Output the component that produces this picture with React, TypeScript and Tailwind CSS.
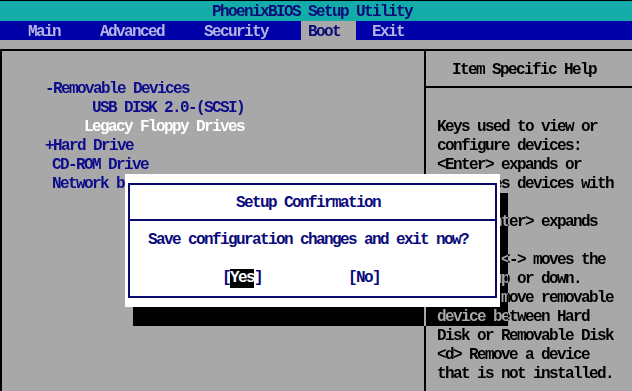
import React from 'react';

const menu = [
  { label: 'Main', ml: 'ml-[28px]' },
  { label: 'Advanced', ml: 'ml-[40px]' },
  { label: 'Security', ml: 'ml-[40px]' },
  { label: 'Boot', ml: 'ml-[33px]', active: true },
  { label: 'Exit', ml: 'ml-[16px]' },
];

const bootItems = [
  { text: '-Removable Devices', pl: 'pl-[43px]', color: 'text-[#0c0c8c]' },
  { text: 'USB DISK 2.0-(SCSI)', pl: 'pl-[90px]', color: 'text-[#0c0c8c]' },
  { text: 'Legacy Floppy Drives', pl: 'pl-[82px]', color: 'text-white' },
  { text: '+Hard Drive', pl: 'pl-[43px]', color: 'text-[#0c0c8c]' },
  { text: 'CD-ROM Drive', pl: 'pl-[50px]', color: 'text-[#0c0c8c]' },
  { text: 'Network boot', pl: 'pl-[50px]', color: 'text-[#0c0c8c]' },
];

const helpLines = [
  'Keys used to view or',
  'configure devices:',
  '<Enter> expands or',
  'collapses devices with',
  'a + or -',
  '<Ctrl+Enter> expands',
  'all',
  '<+> and <-> moves the',
  'device up or down.',
  '<n> May move removable',
  'device between Hard',
  'Disk or Removable Disk',
  '<d> Remove a device',
  'that is not installed.',
];

export default function App() {
  return (
    <div className="relative w-[632px] h-[391px] overflow-hidden bg-[#a8a8a8] font-['Liberation_Mono',monospace] text-[16px] font-bold tracking-[-1.6px] leading-[19px] flex flex-col">
      <div className="h-px bg-black" />
      {/* Title bar */}
      <div className="h-[20px] bg-[#14aca8] text-[#0a0a7a] pt-[2px] pl-[212px] whitespace-pre">
        PhoenixBIOS Setup Utility
      </div>
      {/* Menu bar */}
      <div className="h-[19px] bg-[#0000a8] flex items-stretch whitespace-pre">
        {menu.map((m) =>
          m.active ? (
            <div key={m.label} className={`${m.ml} w-[55px] pl-[7px] pt-[2px] bg-[#a8a8a8] text-[#0a0a7a]`}>
              {m.label}
            </div>
          ) : (
            <div key={m.label} className={`${m.ml} pt-[2px] text-[#b4b4e6]`}>
              {m.label}
            </div>
          )
        )}
      </div>
      <div className="h-[9px]" />

      {/* Main panel */}
      <div className="flex-1 flex border-t-2 border-l-2 border-black">
        <div className="w-[422px] pt-[29px] whitespace-pre">
          {bootItems.map((it) => (
            <div key={it.text} className={`h-[19px] ${it.pl} ${it.color}`}>
              {it.text}
            </div>
          ))}
        </div>
        <div className="flex-1 border-l-2 border-black flex flex-col whitespace-pre text-black">
          <div className="h-[37px] pt-[10px] pl-[26px] border-b-2 border-black">
            Item Specific Help
          </div>
          <div className="pt-[30px] pl-[11px]">
            {helpLines.map((l, i) => (
              <div key={i} className="h-[19px]">
                {l}
              </div>
            ))}
          </div>
        </div>
      </div>

      {/* Dialog shadow: dims underlying cells to grey-on-black */}
      <div className="absolute left-[133px] top-[193px] w-[375px] h-[133px] bg-[#a8a8a8] mix-blend-difference" />

      {/* Setup confirmation dialog */}
      <div className="absolute left-[125px] top-[174px] w-[375px] h-[133px] bg-white px-[3px] py-[9px]">
        <div className="h-full border-2 border-[#0a0a6e] text-[#0a0a7a] whitespace-pre flex flex-col">
          <div className="h-[36px] pt-[9px] pl-[106px] border-b-2 border-[#0a0a6e]">
            Setup Confirmation
          </div>
          <div className="mt-[10px] h-[19px] pl-[18px]">Save configuration changes and exit now?</div>
          <div className="mt-[19px] h-[19px] pl-[92px] flex">
            <span>[</span>
            <span className="bg-black text-white">Yes</span>
            <span>]</span>
            <span className="ml-[86px]">[No]</span>
          </div>
        </div>
      </div>
    </div>
  );
}
